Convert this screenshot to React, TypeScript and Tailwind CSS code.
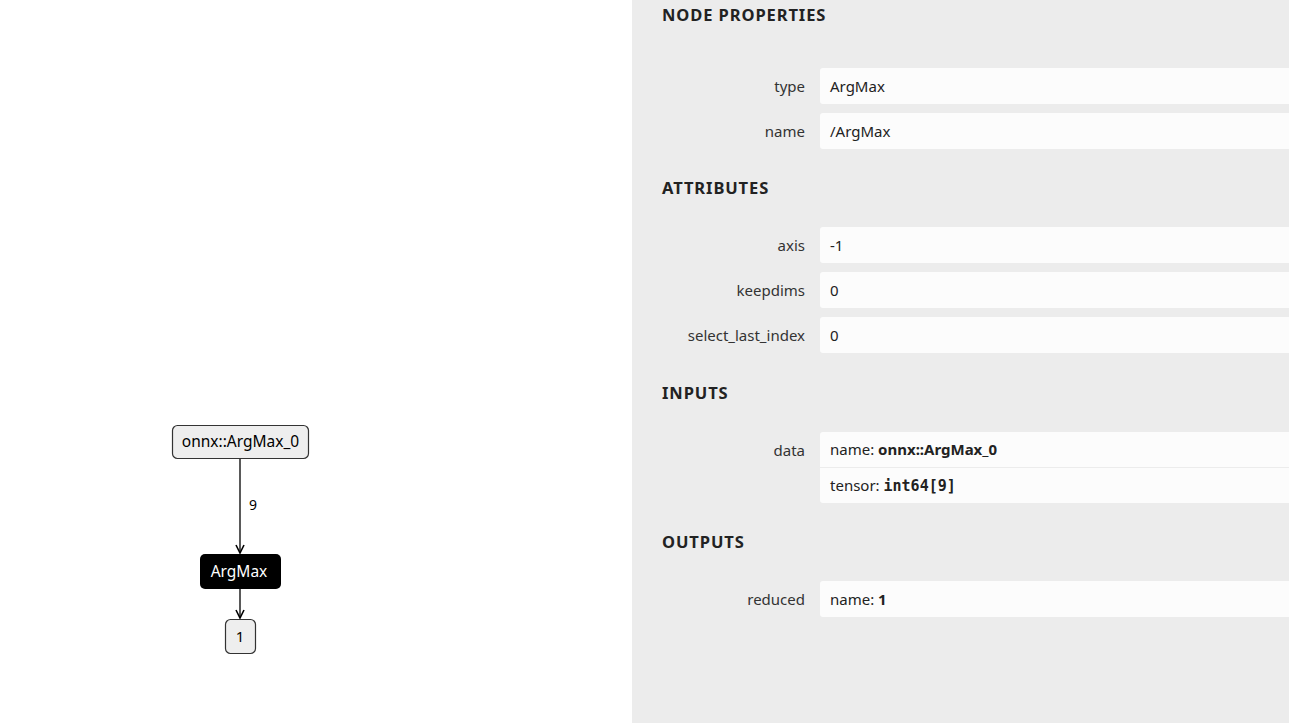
import React from 'react';

type Row = { label: string; value: React.ReactNode[] };

const font = { fontFamily: '"Noto Sans", "Open Sans", sans-serif' };

function Section({ title, rows, top }: { title: string; rows: Row[]; top: string }) {
  const first = top === '';
  return (
    <div className={top}>
      <div className="h-[30px] flex items-center text-[16.5px] font-bold tracking-[0.9px] text-[#222]">{title}</div>
      <div className={`${first ? 'mt-[38px]' : 'mt-[24px]'} flex flex-col gap-[9px]`}>
        {rows.map((r) => (
          <div key={r.label} className="flex gap-[15px]">
            <div className="w-[143px] shrink-0 text-right h-[36px] leading-[36px] text-[15px] text-[#333]">{r.label}</div>
            <div className="w-[600px] shrink-0 bg-[#fcfcfc] rounded-[3px] flex flex-col">
              {r.value.map((v, i) => (
                <div
                  key={i}
                  className={`flex items-center px-[10px] text-[15px] text-[#222] ${
                    i > 0 ? 'h-[36px] border-t border-[#ececec]' : r.value.length === 1 ? 'h-[36px]' : 'h-[35px]'
                  }`}
                >
                  {v}
                </div>
              ))}
            </div>
          </div>
        ))}
      </div>
    </div>
  );
}

function Graph() {
  return (
    <svg width="632" height="723" className="block shrink-0" style={font}>
      <defs>
        <marker id="arr" markerWidth="10" markerHeight="10" refX="9" refY="5" orient="auto" markerUnits="userSpaceOnUse">
          <path d="M1,1 L9,5 L1,9" fill="none" stroke="#000" strokeWidth="1.6" />
        </marker>
      </defs>
      <line x1="240" y1="459" x2="240" y2="553" stroke="#000" strokeWidth="1.3" markerEnd="url(#arr)" />
      <text x="253" y="510" fontSize="14" textAnchor="middle" fill="#000">9</text>
      <line x1="240" y1="589" x2="240" y2="618" stroke="#000" strokeWidth="1.3" markerEnd="url(#arr)" />

      <rect x="172.5" y="425.5" width="136" height="33" rx="5" fill="#eeeeee" stroke="#333" strokeWidth="1.2" />
      <text x="240.5" y="447" fontSize="15.5" textAnchor="middle" fill="#000">onnx::ArgMax_0</text>

      <rect x="200" y="554" width="81" height="35" rx="5" fill="#000" />
      <text x="239" y="577" fontSize="15.5" textAnchor="middle" fill="#fff">ArgMax</text>

      <rect x="225.5" y="619.5" width="30" height="34" rx="5" fill="#eeeeee" stroke="#333" strokeWidth="1.2" />
      <text x="240" y="642" fontSize="15" textAnchor="middle" fill="#000">1</text>
    </svg>
  );
}

const mono = 'font-["DejaVu_Sans_Mono",monospace] font-bold text-[15px]';

export default function App() {
  return (
    <div className="w-[1289px] h-[723px] flex overflow-hidden bg-white" style={font}>
      <Graph />
      <div className="flex-1 bg-[#ececec] pl-[30px] overflow-hidden">
        <Section
          top=""
          title="NODE PROPERTIES"
          rows={[
            { label: 'type', value: ['ArgMax'] },
            { label: 'name', value: ['/ArgMax'] },
          ]}
        />
        <Section
          top="mt-[24px]"
          title="ATTRIBUTES"
          rows={[
            { label: 'axis', value: ['-1'] },
            { label: 'keepdims', value: ['0'] },
            { label: 'select_last_index', value: ['0'] },
          ]}
        />
        <Section
          top="mt-[25px]"
          title="INPUTS"
          rows={[
            {
              label: 'data',
              value: [
                <span>name: <b>onnx::ArgMax_0</b></span>,
                <span>tensor: <span className={mono}>int64[9]</span></span>,
              ],
            },
          ]}
        />
        <Section
          top="mt-[24px]"
          title="OUTPUTS"
          rows={[{ label: 'reduced', value: [<span>name: <b>1</b></span>] }]}
        />
      </div>
    </div>
  );
}
